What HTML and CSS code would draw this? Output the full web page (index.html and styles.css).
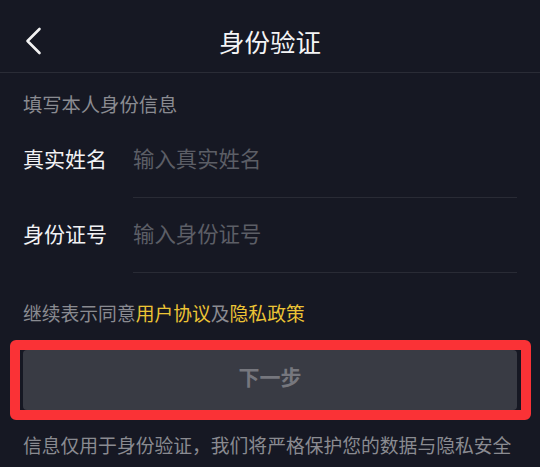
FILE: index.html
```html
<!DOCTYPE html>
<html lang="zh-CN">
<head>
<meta charset="utf-8">
<title>身份验证</title>
<link rel="stylesheet" href="styles.css">
</head>
<body>
<div class="page">
  <header class="topbar">
    <div class="back">
      <svg class="back-icon" width="20" height="30" viewBox="0 0 20 30" aria-hidden="true">
        <path d="M16.5 3 L4.5 15 L16.5 27" fill="none" stroke="#f2f2f2" stroke-width="2.6" stroke-linecap="round" stroke-linejoin="round"/>
      </svg>
    </div>
    <h1 class="title">身份验证</h1>
    <div class="spacer"></div>
  </header>

  <p class="subtitle">填写本人身份信息</p>

  <div class="form">
    <div class="row">
      <span class="label">真实姓名</span>
      <div class="field"><span class="placeholder">输入真实姓名</span></div>
    </div>
    <div class="row">
      <span class="label">身份证号</span>
      <div class="field"><span class="placeholder">输入身份证号</span></div>
    </div>
  </div>

  <p class="agree">继续表示同意<span class="link">用户协议</span>及<span class="link">隐私政策</span></p>

  <div class="btn-wrap">
    <button class="next" type="button">下一步</button>
    <div class="highlight"></div>
  </div>

  <p class="note">信息仅用于身份验证，我们将严格保护您的数据与隐私安全</p>
</div>
</body>
</html>
```

FILE: styles.css
```css
html, body {
  margin: 0;
  padding: 0;
  background: #161823;
}

body {
  font-family: "Noto Sans CJK SC", "Noto Sans", sans-serif;
  width: 540px;
  height: 467px;
  overflow: hidden;
}

.page {
  display: flex;
  flex-direction: column;
}

.topbar {
  display: grid;
  grid-template-columns: 1fr auto 1fr;
  align-items: center;
  height: 62px;
  padding: 10px 23px 0;
  border-bottom: 1px solid #2a2c36;
}

.back {
  display: flex;
  align-items: center;
}

.back-icon {
  display: block;
}

.title {
  margin: 0;
  font-size: 25.5px;
  line-height: 30px;
  font-weight: 400;
  color: #f4f4f5;
}

.subtitle {
  margin: 18px 0 0;
  padding: 0 23px;
  font-size: 19.3px;
  line-height: 27px;
  color: #8a8b91;
}

.form {
  margin-top: 5px;
  display: flex;
  flex-direction: column;
}

.row {
  display: flex;
  align-items: stretch;
  padding: 0 23px;
}

.label {
  flex: 0 0 110px;
  display: flex;
  align-items: center;
  padding-bottom: 5px;
  font-size: 21px;
  font-weight: 400;
  color: #f2f2f4;
}

.field {
  flex: 1;
  height: 69px;
  padding-bottom: 5px;
  display: flex;
  align-items: center;
  border-bottom: 1px solid #292b35;
}

.placeholder {
  font-size: 21.4px;
  color: #5c5e66;
}

.agree {
  margin: 27px 0 0;
  padding: 0 23px;
  font-size: 18.8px;
  line-height: 26px;
  color: #8a8b91;
  white-space: nowrap;
}

.link {
  color: #ecc435;
}

.btn-wrap {
  position: relative;
  margin: 24px 23px 0;
}

.next {
  display: block;
  width: 100%;
  height: 60px;
  border: none;
  border-radius: 4px;
  background: #393b44;
  color: #76777e;
  font-family: "Noto Sans CJK SC", "Noto Sans", sans-serif;
  font-size: 21px;
  font-weight: 700;
  padding: 0 0 8px;
}

.highlight {
  position: absolute;
  top: -10px;
  bottom: -10px;
  left: -13px;
  right: -14px;
  border: 10px solid #fa3236;
  border-radius: 6px;
  pointer-events: none;
}

.note {
  margin: 22px 0 0;
  padding: 0 23px;
  font-size: 18.8px;
  line-height: 26px;
  color: #8a8b91;
  white-space: nowrap;
}
```
